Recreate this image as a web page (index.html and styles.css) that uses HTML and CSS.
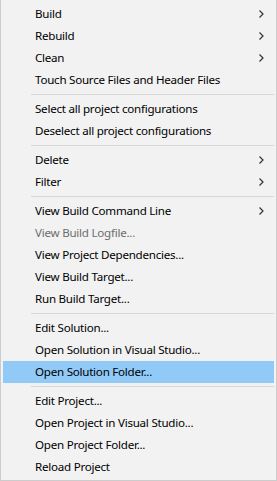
FILE: index.html
```html
<!DOCTYPE html>
<html lang="en">
<head>
  <meta charset="UTF-8" />
  <title>Context menu</title>
  <link rel="stylesheet" href="styles.css">
</head>
<body>
  <div class="menu">
    <div class="item sub">Build <svg class="arrow" width="5" height="8"><path d="M0.5 0.5 L4 4 L0.5 7.5" /></svg></div>
    <div class="item sub">Rebuild <svg class="arrow" width="5" height="8"><path d="M0.5 0.5 L4 4 L0.5 7.5" /></svg></div>
    <div class="item sub">Clean <svg class="arrow" width="5" height="8"><path d="M0.5 0.5 L4 4 L0.5 7.5" /></svg></div>
    <div class="item">Touch Source Files and Header Files</div>
    <div class="sep"></div>
    <div class="item">Select all project configurations</div>
    <div class="item">Deselect all project configurations</div>
    <div class="sep"></div>
    <div class="item sub">Delete <svg class="arrow" width="5" height="8"><path d="M0.5 0.5 L4 4 L0.5 7.5" /></svg></div>
    <div class="item sub">Filter <svg class="arrow" width="5" height="8"><path d="M0.5 0.5 L4 4 L0.5 7.5" /></svg></div>
    <div class="sep"></div>
    <div class="item sub">View Build Command Line <svg class="arrow" width="5" height="8"><path d="M0.5 0.5 L4 4 L0.5 7.5" /></svg></div>
    <div class="item disabled">View Build Logfile...</div>
    <div class="item">View Project Dependencies...</div>
    <div class="item">View Build Target...</div>
    <div class="item">Run Build Target...</div>
    <div class="sep"></div>
    <div class="item">Edit Solution...</div>
    <div class="item">Open Solution in Visual Studio...</div>
    <div class="item active">Open Solution Folder...</div>
    <div class="sep"></div>
    <div class="item">Edit Project...</div>
    <div class="item">Open Project in Visual Studio...</div>
    <div class="item">Open Project Folder...</div>
    <div class="item">Reload Project</div>
  </div>
</body>
</html>
```

FILE: styles.css
```css
body {
  margin: 0;
  background: #f2f2f2;
}

.menu {
  box-sizing: border-box;
  width: 277px;
  height: 481px;
  padding: 2px;
  background: #f2f2f2;
  border: 1px solid #cccccc;
  border-top: none;
  padding-top: 3px;
  font-family: "Noto Sans", "Open Sans", sans-serif;
  font-size: 11.6px;
  letter-spacing: -0.25px;
  color: #000;
}

.item {
  box-sizing: border-box;
  display: flex;
  align-items: center;
  justify-content: space-between;
  height: 22px;
  padding: 0 10px 2px 32px;
  white-space: nowrap;
}

.item .arrow {
  margin-top: 2px;
}

.item.active {
  background: #91c9f7;
}

.item.disabled {
  color: #6d6d6d;
}

.arrow {
  fill: none;
  stroke: #333;
  stroke-width: 1.2;
}

.sep {
  height: 7px;
  display: flex;
  align-items: center;
  padding-left: 28px;
}

.sep::before {
  content: "";
  flex: 1;
  height: 1px;
  background: #d7d7d7;
}
```
